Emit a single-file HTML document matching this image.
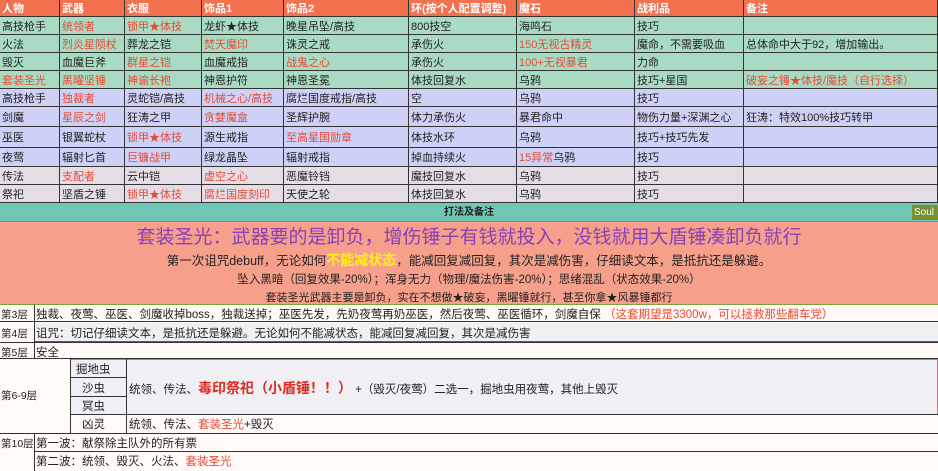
<!DOCTYPE html><html><head><meta charset="utf-8"><style>
*{margin:0;padding:0;box-sizing:border-box}
body{width:938px;height:471px;overflow:hidden;background:#fff;font-family:"Liberation Sans","Noto Sans CJK SC",sans-serif;font-size:11px;color:#222;position:relative}
.r{position:absolute;left:0;width:938px;border-bottom:1px solid #333}
.c{position:absolute;top:0;height:100%;border-right:1px solid #333;padding-left:2px;white-space:nowrap;overflow:hidden;display:flex;align-items:center}
.red{color:#e84a36}
.h{background:#f4714f;color:#fff;font-weight:bold}
.g{background:#a9dbc2}.l{background:#ccd1f5}.p{background:#e4dde6}
.a{position:absolute;white-space:nowrap}
.lb{font-size:10.5px}
</style></head><body>
<div id="t"></div>
<div class="r" style="top:203px;height:19px;background:#6fc6b5;border-bottom:1px solid #7aa040;text-align:center;font-size:10px;font-weight:bold;line-height:19px">打法及备注</div>
<div class="a" style="left:912px;top:205px;width:26px;height:15px;background:#76912e;color:#fff;font-size:10px;line-height:15px;padding-left:2px">Soul</div>
<div style="position:absolute;left:0;top:222px;width:938px;height:83px;background:#f6a08c;border-bottom:1px solid #7aa040;text-align:center">
<div style="color:#8a3fb8;font-size:19px;margin-top:4px;line-height:24px">套装圣光：武器要的是卸负，增伤锤子有钱就投入，没钱就用大盾锤凑卸负就行</div>
<div style="font-size:12.5px;line-height:20px">第一次诅咒debuff，无论如何<b style="color:#ffee22;font-size:14px">不能减状态</b>，能减回复减回复，其次是减伤害，仔细读文本，是抵抗还是躲避。</div>
<div style="font-size:11.5px;line-height:19px">坠入黑暗（回复效果-20%）；浑身无力（物理/魔法伤害-20%）；思绪混乱（状态效果-20%）</div>
<div style="font-size:11px;line-height:17px">套装圣光武器主要是卸负，实在不想做★破妄，黑曜锤就行，甚至你拿★风暴锤都行</div>
</div>
<script>
var cols=[0,60,125,202,284,409,517,635,744,938];
var rows=[
["h",0,17,["人物","武器","衣服","饰品1","饰品2","环(按个人配置调整)","魔石","战利品","备注"]],
["g",17,18,["高技枪手","*统领者","*锁甲★体技","龙虾★体技","晚星吊坠/高技","800技空","海鸣石","技巧",""]],
["g",35,18,["火法","*烈炎星陨杖","葬龙之铠","*焚天魔印","诛灵之戒","承伤火","*150无视古精灵","魔命，不需要吸血","总体命中大于92，增加输出。"]],
["g",53,18,["毁灭","血魔巨斧","*群星之铠","血魔戒指","*战鬼之心","承伤火","*100+无视暴君","力命",""]],
["g",71,18,["*套装圣光","*黑曜坚锤","*神谕长袍","神恩护符","神恩圣冕","体技回复水","乌鸦","技巧+星国","*破妄之锤★体技/魔技（自行选择）"]],
["l",89,18,["高技枪手","*独裁者","灵蛇铠/高技","*机械之心/高技","腐烂国度戒指/高技","空","乌鸦","技巧",""]],
["l",107,20,["剑魔","*星辰之剑","狂涛之甲","*贪婪魔盒","圣辉护腕","体力承伤火","暴君命中","物伤力量+深渊之心","狂涛：特效100%技巧转甲"]],
["l",127,21,["巫医","银翼蛇杖","*锁甲★体技","源生戒指","*至高星国勋章","体技水环","乌鸦","技巧+技巧先发",""]],
["l",148,19,["夜莺","辐射匕首","*巨镰战甲","绿龙晶坠","辐射戒指","掉血持续火","#15异常乌鸦","技巧",""]],
["p",167,18,["传法","*支配者","云中铠","*虚空之心","恶魔铃铛","魔技回复水","乌鸦","技巧",""]],
["p",185,18,["祭祀","坚盾之锤","*锁甲★体技","*腐烂国度刻印","天使之轮","体技回复水","乌鸦","技巧",""]]];
var h="";
rows.forEach(function(r){
h+='<div class="r '+r[0]+'" style="top:'+r[1]+'px;height:'+r[2]+'px">';
for(var i=0;i<9;i++){var t=r[3][i],cl="";
if(t[0]=="*"){t=t.slice(1);cl="red";}
if(t[0]=="#"){t='<span class="red">15异常</span>乌鸦';}
h+='<div class="c '+cl+'" style="left:'+cols[i]+'px;width:'+(cols[i+1]-cols[i])+'px">'+t+'</div>';}
h+='</div>';});
document.getElementById("t").innerHTML=h;
</script>
<div style="position:absolute;left:0;top:305px;width:938px;height:166px;background:#fffaf7;font-size:11.5px">
<div class="a" style="left:0;top:0;width:938px;height:17px;border-bottom:1px solid #333"></div>
<div class="a lb" style="left:1px;top:2px">第3层</div>
<div class="a" style="left:36px;top:1px">独裁、夜莺、巫医、剑魔收掉boss，独裁送掉；巫医先发，先奶夜莺再奶巫医，然后夜莺、巫医循环，剑魔自保 <span class="red">（这套期望是3300w，可以拯救那些翻车党）</span></div>
<div class="a" style="left:34px;top:18px;width:904px;height:19px;background:#f0eff4;border-bottom:1px solid #7a4a7a"></div>
<div class="a" style="left:0;top:37px;width:938px;height:1px;background:#333"></div>
<div class="a lb" style="left:1px;top:21px">第4层</div>
<div class="a" style="left:36px;top:20px">诅咒：切记仔细读文本，是抵抗还是躲避。无论如何不能减状态，能减回复减回复，其次是减伤害</div>
<div class="a lb" style="left:1px;top:40px">第5层</div>
<div class="a" style="left:36px;top:39px">安全</div>
<div class="a" style="left:0;top:53px;width:938px;height:1px;background:#333"></div>
<div class="a" style="left:70px;top:54px;width:868px;height:56px;background:#f0eff4;border:1px solid #d07090;border-left:none"></div>
<div class="a lb" style="left:1px;top:83px">第6-9层</div>
<div class="a" style="left:70px;top:54px;width:1px;height:74px;background:#333"></div>
<div class="a" style="left:70px;top:72px;width:56px;height:1px;background:#333"></div>
<div class="a" style="left:70px;top:91px;width:56px;height:1px;background:#333"></div>
<div class="a" style="left:70px;top:109px;width:868px;height:1px;background:#333"></div>
<div class="a" style="left:126px;top:54px;width:1px;height:74px;background:#333"></div>
<div class="a" style="left:76px;top:56px">掘地虫</div>
<div class="a" style="left:82px;top:75px">沙虫</div>
<div class="a" style="left:82px;top:93px">冥虫</div>
<div class="a" style="left:82px;top:111px">凶灵</div>
<div class="a" style="left:129px;top:73px">统领、传法、<b class="red" style="font-size:14px;color:#e02a20">毒印祭祀（小盾锤！！）</b> +（毁灭/夜莺）二选一，掘地虫用夜莺，其他上毁灭</div>
<div class="a" style="left:129px;top:111px">统领、传法、<span class="red">套装圣光</span>+毁灭</div>
<div class="a" style="left:0;top:128px;width:938px;height:1px;background:#333"></div>
<div class="a lb" style="left:1px;top:131px">第10层</div>
<div class="a" style="left:36px;top:130px">第一波：献祭除主队外的所有票</div>
<div class="a" style="left:34px;top:146px;width:904px;height:1px;background:#333"></div>
<div class="a" style="left:36px;top:148px">第二波：统领、毁灭、火法、<span class="red">套装圣光</span></div>
<div class="a" style="left:34px;top:0;width:1px;height:54px;background:#333"></div>
<div class="a" style="left:34px;top:128px;width:1px;height:38px;background:#333"></div>
</div>
</body></html>
